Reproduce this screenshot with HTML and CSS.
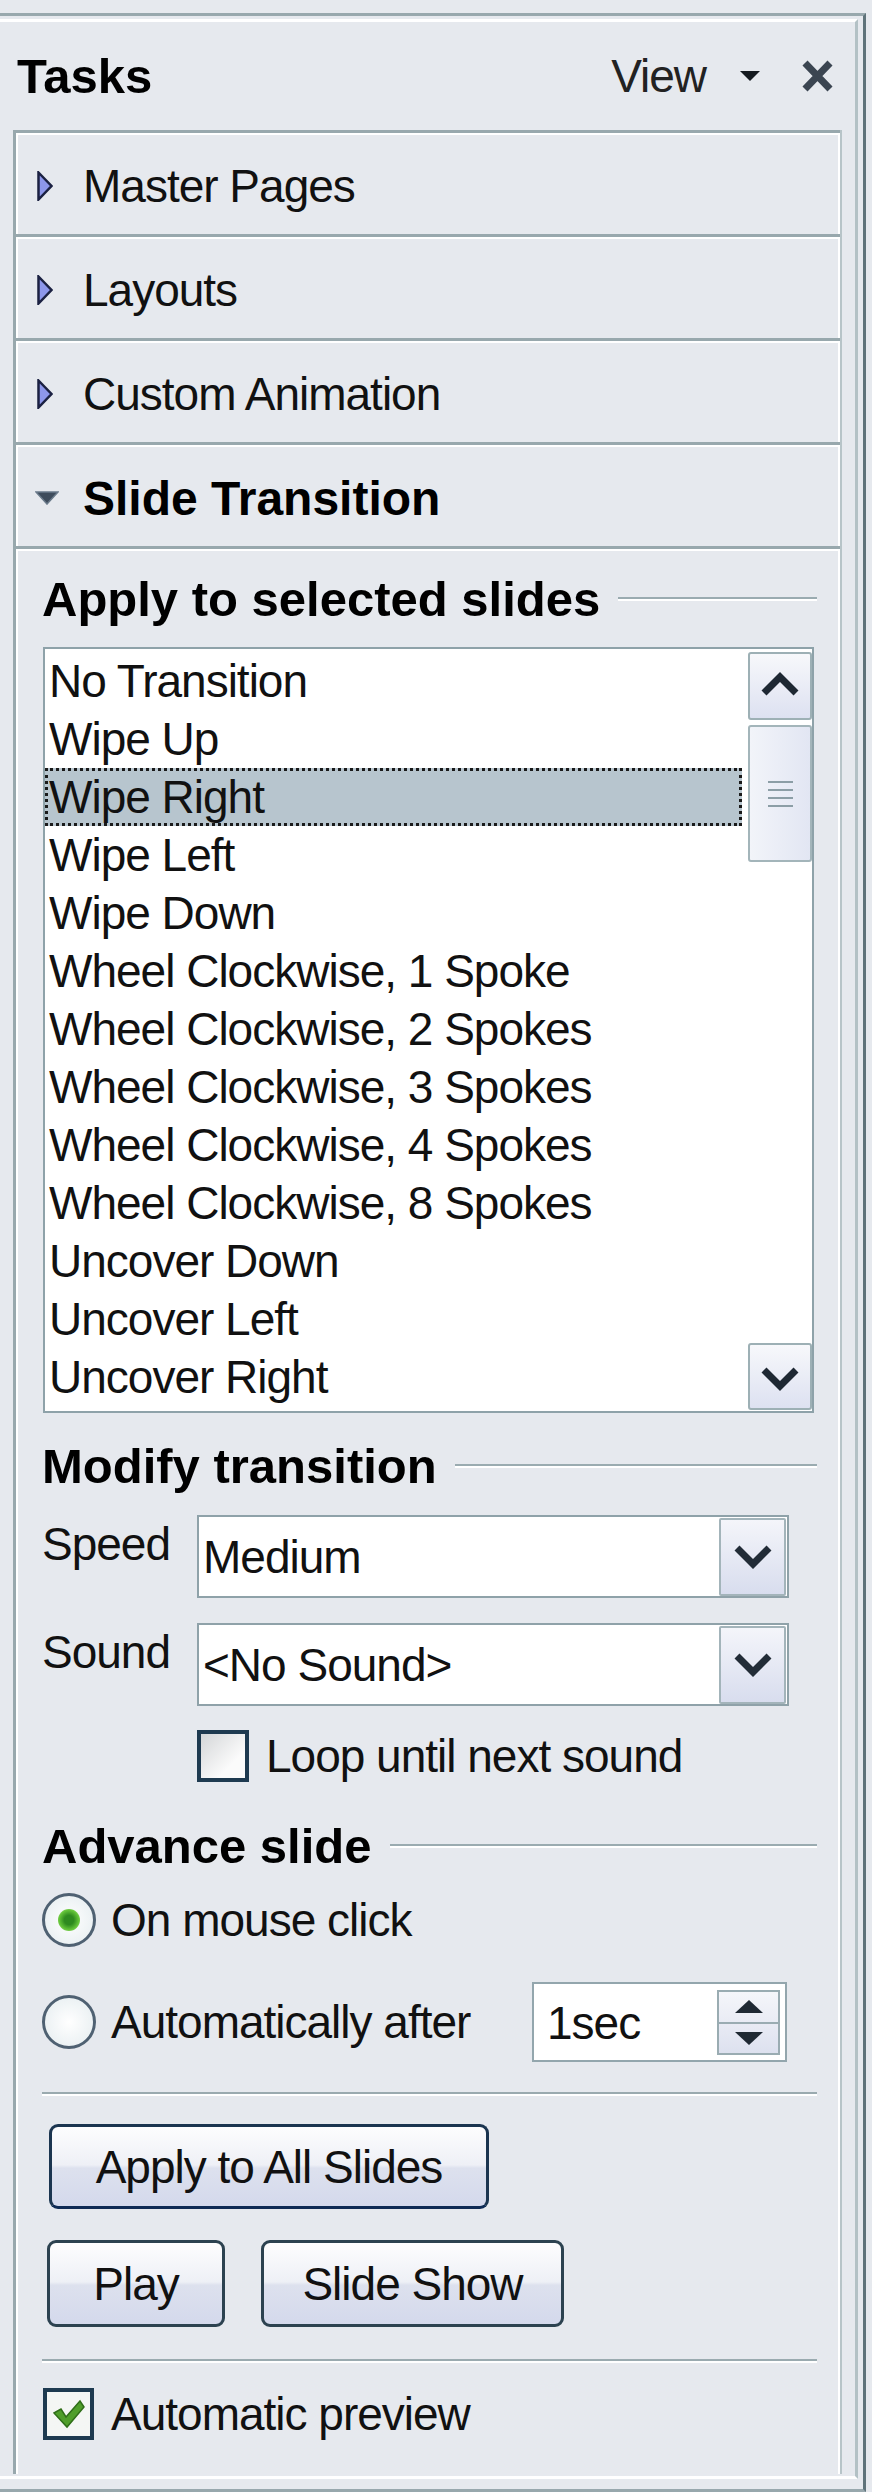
FILE: index.html
```html
<!DOCTYPE html>
<html lang="en">
<head>
    <meta charset="UTF-8">
    <title>Tasks - Slide Transition</title>
    <link rel="stylesheet" href="styles.css">
</head>
<body>
    <div class="pane">
        <div class="pane-inner">
            <div class="pane-head">
                <span class="pane-title">Tasks</span>
                <span class="pane-view">View</span>
                <svg class="pane-menu" width="20" height="10" viewBox="0 0 20 10"><polygon points="0,0 20,0 10,10" fill="#151a20"/></svg>
                <svg class="pane-close" width="31" height="32" viewBox="0 0 31 32"><path d="M3 3 L28 29 M28 3 L3 29" stroke="#3b4551" stroke-width="7"/></svg>
            </div>

            <div class="task-box">
                <div class="fold">
                    <span class="fold-icon"><svg width="16" height="30" viewBox="0 0 16 30"><polygon points="1.5,1.5 14.5,15 1.5,28.5" fill="#8d97ea" stroke="#1b2142" stroke-width="2.5"/></svg></span>
                    <span>Master Pages</span>
                </div>
                <div class="fold">
                    <span class="fold-icon"><svg width="16" height="30" viewBox="0 0 16 30"><polygon points="1.5,1.5 14.5,15 1.5,28.5" fill="#8d97ea" stroke="#1b2142" stroke-width="2.5"/></svg></span>
                    <span>Layouts</span>
                </div>
                <div class="fold">
                    <span class="fold-icon"><svg width="16" height="30" viewBox="0 0 16 30"><polygon points="1.5,1.5 14.5,15 1.5,28.5" fill="#8d97ea" stroke="#1b2142" stroke-width="2.5"/></svg></span>
                    <span>Custom Animation</span>
                </div>
                <div class="fold fold-open">
                    <span class="fold-icon"><svg width="24" height="14" viewBox="0 0 24 14"><polygon points="1,1 23,1 12,13" fill="#3e4c5c" stroke="#6a7a8a" stroke-width="1.5"/></svg></span>
                    <span>Slide Transition</span>
                </div>

                <div class="fold-body">
                    <div class="group-title">Apply to selected slides</div>
                    <div class="listbox">
                        <ul class="list-items">
                            <li>No Transition</li>
                            <li>Wipe Up</li>
                            <li class="selected">Wipe Right</li>
                            <li>Wipe Left</li>
                            <li>Wipe Down</li>
                            <li>Wheel Clockwise, 1 Spoke</li>
                            <li>Wheel Clockwise, 2 Spokes</li>
                            <li>Wheel Clockwise, 3 Spokes</li>
                            <li>Wheel Clockwise, 4 Spokes</li>
                            <li>Wheel Clockwise, 8 Spokes</li>
                            <li>Uncover Down</li>
                            <li>Uncover Left</li>
                            <li>Uncover Right</li>
                        </ul>
                        <div class="vscroll">
                            <div class="sb-btn"><svg width="38" height="24" viewBox="0 0 38 24"><path d="M3 21 L19 5 L35 21" fill="none" stroke="#1e2833" stroke-width="7"/></svg></div>
                            <div class="sb-thumb"><span></span><span></span><span></span><span></span></div>
                            <div class="sb-track"></div>
                            <div class="sb-btn sb-down"><svg width="38" height="24" viewBox="0 0 38 24"><path d="M3 3 L19 19 L35 3" fill="none" stroke="#1e2833" stroke-width="7"/></svg></div>
                        </div>
                    </div>

                    <div class="group-title gap-modify">Modify transition</div>
                    <div class="field">
                        <span class="field-label">Speed</span>
                        <div class="combo">
                            <span class="combo-text">Medium</span>
                            <span class="combo-btn"><svg width="38" height="24" viewBox="0 0 38 24"><path d="M3 3 L19 19 L35 3" fill="none" stroke="#222c37" stroke-width="7"/></svg></span>
                        </div>
                    </div>
                    <div class="field field-sound">
                        <span class="field-label">Sound</span>
                        <div class="combo">
                            <span class="combo-text">&lt;No Sound&gt;</span>
                            <span class="combo-btn"><svg width="38" height="24" viewBox="0 0 38 24"><path d="M3 3 L19 19 L35 3" fill="none" stroke="#222c37" stroke-width="7"/></svg></span>
                        </div>
                    </div>
                    <div class="check-row loop-row">
                        <span class="checkbox"></span>
                        <span>Loop until next sound</span>
                    </div>

                    <div class="group-title gap-advance">Advance slide</div>
                    <div class="radio-row radio-first">
                        <span class="radio checked"></span>
                        <span>On mouse click</span>
                    </div>
                    <div class="radio-row radio-second">
                        <span class="radio"></span>
                        <span>Automatically after</span>
                        <div class="spin">
                            <span class="spin-text">1sec</span>
                            <span class="spin-btns">
                                <span><svg width="28" height="13" viewBox="0 0 28 13"><polygon points="14,0 28,13 0,13" fill="#1f2933"/></svg></span>
                                <span class="spin-down"><svg width="28" height="13" viewBox="0 0 28 13"><polygon points="0,0 28,0 14,13" fill="#1f2933"/></svg></span>
                            </span>
                        </div>
                    </div>

                    <div class="sep sep-first"></div>
                    <button class="btn btn-default btn-apply">Apply to All Slides</button>
                    <div class="btn-row">
                        <button class="btn btn-play">Play</button>
                        <button class="btn btn-show">Slide Show</button>
                    </div>
                    <div class="sep sep-last"></div>

                    <div class="check-row preview-row">
                        <span class="checkbox checked">
                            <svg width="36" height="30" viewBox="0 0 36 30"><path d="M3 14 L10 10 L15 18 L29 2 L33 8 L16 28 Z" fill="#4f9e2a" stroke="#2f6e18" stroke-width="1.5"/></svg>
                        </span>
                        <span>Automatic preview</span>
                    </div>
                </div>
            </div>
        </div>
    </div>
</body>
</html>
```

FILE: styles.css
```css
body {
    margin: 0;
    background: #e6e9ee;
    font-family: 'Liberation Sans', Arial, sans-serif;
    font-size: 46px;
    letter-spacing: -1px;
    color: #111;
}

/* outer pane frame */
.pane {
    width: 866px;
    box-sizing: border-box;
    margin-top: 13px;
    padding-bottom: 10px;
    border-top: 3px solid #98a8ad;
    border-right: 3px solid #5f737a;
    border-bottom: 3px solid #98a8ad;
}

.pane-inner {
    margin: 3px 5px 0 0;
    padding-bottom: 2px;
    border-top: 3px solid #fff;
    border-right: 3px solid #b3c1c5;
    border-bottom: 3px solid #fff;
}

.pane-head {
    display: flex;
    align-items: center;
    height: 108px;
    padding: 0 22px 0 17px;
}

.pane-title {
    flex: 1;
    font-size: 49px;
    font-weight: bold;
    letter-spacing: 0;
    color: #000;
}

.pane-view {
    margin-right: 34px;
    color: #222;
}

.pane-menu {
    margin-right: 42px;
}

/* collapsible sections */
.task-box {
    margin: 0 13px;
    border-left: 3px solid #98a8ad;
    border-right: 2px solid #b7c4c8;
    box-shadow: inset 2px 0 #fff, inset -2px 0 #fff;
}

.fold {
    display: flex;
    align-items: center;
    height: 104px;
    box-sizing: border-box;
    padding: 5px 0 0 21px;
    border-top: 3px solid #98a8ad;
    box-shadow: inset 0 2px #fff;
}

.fold-icon {
    display: flex;
    align-items: center;
    width: 46px;
}

.fold-open {
    font-size: 48px;
    font-weight: bold;
    letter-spacing: 0;
    color: #000;
}

.fold-open .fold-icon svg {
    margin-left: -2px;
}

.fold-body {
    padding: 22px 23px 33px 26px;
    border-top: 3px solid #98a8ad;
    box-shadow: inset 0 2px #fff;
}

.group-title {
    display: flex;
    align-items: center;
    height: 56px;
    font-size: 49px;
    font-weight: bold;
    letter-spacing: 0;
    color: #000;
}

.group-title::after {
    content: "";
    flex: 1;
    margin-left: 18px;
    border-top: 2px solid #9aabb0;
    border-bottom: 2px solid #fff;
}

.gap-modify {
    margin-top: 25px;
}

.gap-advance {
    margin-top: 35px;
}

/* transition list */
.listbox {
    display: flex;
    height: 766px;
    box-sizing: border-box;
    margin: 20px 3px 0 1px;
    border: 2px solid #8ea2a9;
    background: #fff;
}

.list-items {
    flex: 1;
    margin: 0 5px 0 0;
    padding: 3px 0 0;
    list-style: none;
}

.list-items li {
    height: 58px;
    line-height: 58px;
    padding-left: 4px;
    white-space: nowrap;
}

.list-items li.selected {
    background: #b7c5ce;
    outline: 3px dotted #1a1a1a;
    outline-offset: -3px;
}

.vscroll {
    display: flex;
    flex-direction: column;
    width: 64px;
    padding: 3px 0 1px 1px;
}

.sb-btn {
    display: flex;
    align-items: center;
    justify-content: center;
    height: 68px;
    box-sizing: border-box;
    border: 2px solid #9db0b5;
    border-radius: 3px;
    background: linear-gradient(#f7f8fb, #dde1f1);
}

.sb-btn svg {
    margin-top: -4px;
}

.sb-down {
    height: 67px;
}

.sb-down svg {
    margin-top: 4px;
}

.sb-thumb {
    display: flex;
    flex-direction: column;
    align-items: center;
    justify-content: center;
    gap: 6px;
    height: 137px;
    box-sizing: border-box;
    margin-top: 5px;
    border: 2px solid #a3b5ba;
    border-radius: 3px;
    background: linear-gradient(90deg, #f2f4f9, #e2e6f3);
}

.sb-thumb span {
    width: 25px;
    height: 2px;
    background: #8c9ea6;
}

.sb-track {
    flex: 1;
}

/* fields */
.field {
    display: flex;
    margin-top: 21px;
}

.field-sound {
    margin-top: 25px;
}

.field-label {
    width: 155px;
    line-height: 58px;
}

.combo {
    display: flex;
    align-items: center;
    width: 592px;
    height: 83px;
    box-sizing: border-box;
    padding: 1px 1px 0 4px;
    border: 2px solid #8fa2a9;
    background: #fff;
}

.combo-text {
    flex: 1;
}

.combo-btn {
    display: flex;
    align-items: center;
    justify-content: center;
    align-self: stretch;
    width: 67px;
    box-sizing: border-box;
    border: 2px solid #a3b4ba;
    border-radius: 2px;
    background: linear-gradient(#f4f5fa, #d8ddee);
}

.check-row {
    display: flex;
    align-items: center;
}

.loop-row {
    margin-top: 23px;
    padding-left: 155px;
}

.checkbox {
    display: flex;
    align-items: center;
    justify-content: center;
    width: 52px;
    height: 52px;
    box-sizing: border-box;
    margin-right: 17px;
    border: 4px solid #1e3a50;
    background: linear-gradient(135deg, #d4d6d8, #fbfbfb 70%);
}

.preview-row {
    margin-top: 24px;
    padding-left: 1px;
}

.preview-row .checkbox {
    width: 51px;
    background: #f4f6f4;
}

/* radios */
.radio-row {
    display: flex;
    align-items: center;
}

.radio-first {
    height: 54px;
    margin-top: 19px;
}

.radio-second {
    height: 80px;
    margin-top: 35px;
}

.radio {
    display: flex;
    align-items: center;
    justify-content: center;
    width: 54px;
    height: 54px;
    box-sizing: border-box;
    margin-right: 15px;
    border: 3px solid #4f6172;
    border-radius: 50%;
    background: radial-gradient(#ffffff, #e4ecef);
}

.radio.checked::after {
    content: "";
    width: 22px;
    height: 22px;
    border-radius: 50%;
    background: radial-gradient(circle, #2e8a1f 30%, #62c238 62%, #b6ec8c 100%);
}

.spin {
    display: flex;
    align-items: center;
    width: 255px;
    height: 80px;
    box-sizing: border-box;
    margin: 0 30px 0 auto;
    padding: 6px 5px 5px 13px;
    border: 2px solid #93a6ad;
    background: #fff;
}

.spin-text {
    flex: 1;
}

.spin-btns {
    display: flex;
    flex-direction: column;
    align-self: stretch;
    width: 63px;
    box-sizing: border-box;
    border: 2px solid #9aacb2;
    background: linear-gradient(#f5f6fa, #dde1ef);
}

.spin-btns span {
    display: flex;
    align-items: center;
    justify-content: center;
    flex: 1;
}

.spin-btns .spin-down {
    border-top: 2px solid #9aacb2;
}

/* separators and buttons */
.sep {
    height: 0;
    border-top: 2px solid #9aaaaf;
    border-bottom: 2px solid #fff;
}

.sep-first {
    margin-top: 30px;
}

.sep-last {
    margin-top: 32px;
}

.btn {
    display: block;
    height: 85px;
    box-sizing: border-box;
    padding: 0;
    border: 3px solid #2c4250;
    border-radius: 9px;
    background: linear-gradient(#fdfdfe 0%, #eef0f6 48%, #dde1ee 52%, #d4d9ec 100%);
    font: inherit;
    letter-spacing: -1px;
    color: #111;
}

.btn-default {
    border-color: #1b3550;
    border-bottom-color: #0e2a55;
}

.btn-apply {
    width: 440px;
    margin: 28px 0 0 7px;
}

.btn-row {
    display: flex;
    gap: 36px;
    margin-top: 31px;
    padding-left: 5px;
}

.btn-play {
    width: 178px;
    height: 87px;
}

.btn-show {
    width: 303px;
    height: 87px;
}
```
